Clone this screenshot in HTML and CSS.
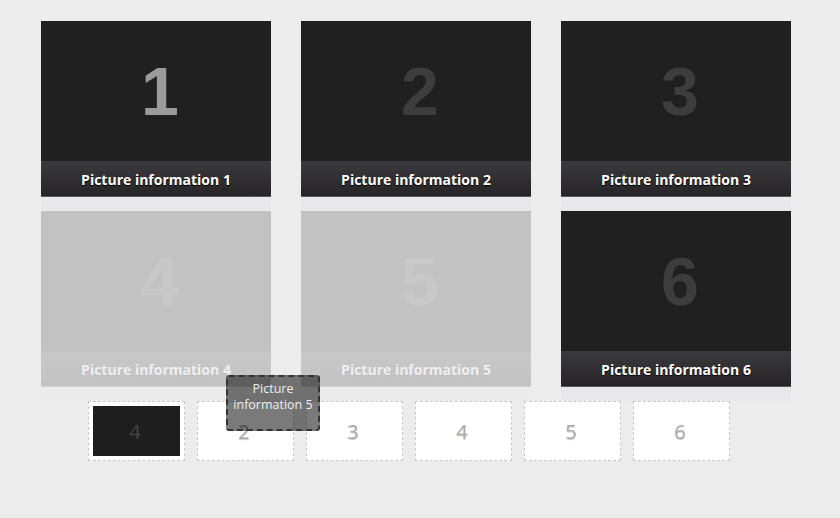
FILE: index.html
```html
<!DOCTYPE html>
<html lang="en">
<head>
    <meta charset="UTF-8">
    <meta name="viewport" content="width=device-width, initial-scale=1.0">
    <title>Picture Sorter</title>
    <link rel="stylesheet" href="styles.css">
</head>
<body>
    <div class="gallery">
        <div class="card active">
            <div class="card-pic">1</div>
            <div class="card-caption">Picture information 1</div>
        </div>
        <div class="card">
            <div class="card-pic">2</div>
            <div class="card-caption">Picture information 2</div>
        </div>
        <div class="card">
            <div class="card-pic">3</div>
            <div class="card-caption">Picture information 3</div>
        </div>
        <div class="card faded">
            <div class="card-pic">4</div>
            <div class="card-caption">Picture information 4</div>
        </div>
        <div class="card faded">
            <div class="card-pic">5</div>
            <div class="card-caption">Picture information 5</div>
        </div>
        <div class="card">
            <div class="card-pic">6</div>
            <div class="card-caption">Picture information 6</div>
        </div>
    </div>

    <div class="thumbs">
        <div class="thumb current"><span class="thumb-inner">4</span></div>
        <div class="thumb"><span class="thumb-inner">2</span></div>
        <div class="thumb"><span class="thumb-inner">3</span></div>
        <div class="thumb"><span class="thumb-inner">4</span></div>
        <div class="thumb"><span class="thumb-inner">5</span></div>
        <div class="thumb"><span class="thumb-inner">6</span></div>
    </div>

    <!-- item being dragged -->
    <div class="drag-ghost">Picture<br>information 5</div>
</body>
</html>
```

FILE: styles.css
```css
body, html {
    margin: 0;
    padding: 0;
    background-color: #ececec;
    font-family: 'Open Sans', 'Noto Sans', sans-serif;
    height: 100%;
}

body {
    position: relative;
}

.gallery {
    display: grid;
    grid-template-columns: repeat(3, 230px);
    column-gap: 30px;
    padding: 21px 0 0 41px;
}

.card {
    height: 190px;
    background-color: #e8e8ea;
}

.card.faded {
    opacity: 0.2;
}

.card-pic {
    height: 140px;
    box-sizing: border-box;
    padding-left: 8px;
    background-color: #202020;
    display: flex;
    align-items: center;
    justify-content: center;
    font-family: 'Liberation Sans', Arial, sans-serif;
    font-weight: bold;
    font-size: 68px;
    color: #3d3d3d;
}

.card.active .card-pic {
    color: #9b9b9b;
}

.card-caption {
    height: 36px;
    box-sizing: border-box;
    padding-top: 1px;
    line-height: 36px;
    text-align: center;
    color: #fff;
    font-weight: bold;
    font-size: 14px;
    background: linear-gradient(#3b3a3c, #262426);
    border-bottom: 1px solid #5a5a5a;
    text-shadow: 0 1px 1px #000;
}

.thumbs {
    display: flex;
    gap: 12px;
    padding-left: 88px;
}

.thumb {
    width: 97px;
    height: 60px;
    box-sizing: border-box;
    border: 1px dashed #c8c8c8;
    background-color: #fff;
    padding: 4px;
    display: flex;
}

.thumb-inner {
    flex: 1;
    display: flex;
    align-items: center;
    justify-content: center;
    padding-right: 3px;
    font-size: 20px;
    color: #aaa;
    text-shadow: 0 1px 1px #ccc;
}

.thumb.current .thumb-inner {
    background-color: #1e1e1e;
    color: #444;
    text-shadow: none;
}

.drag-ghost {
    position: absolute;
    left: 226px;
    top: 375px;
    width: 94px;
    height: 56px;
    box-sizing: border-box;
    padding-top: 4px;
    border: 2px dashed #333;
    border-radius: 3px;
    background-color: rgba(0, 0, 0, 0.52);
    color: #eee;
    font-size: 12.5px;
    line-height: 16px;
    text-align: center;
}
```
